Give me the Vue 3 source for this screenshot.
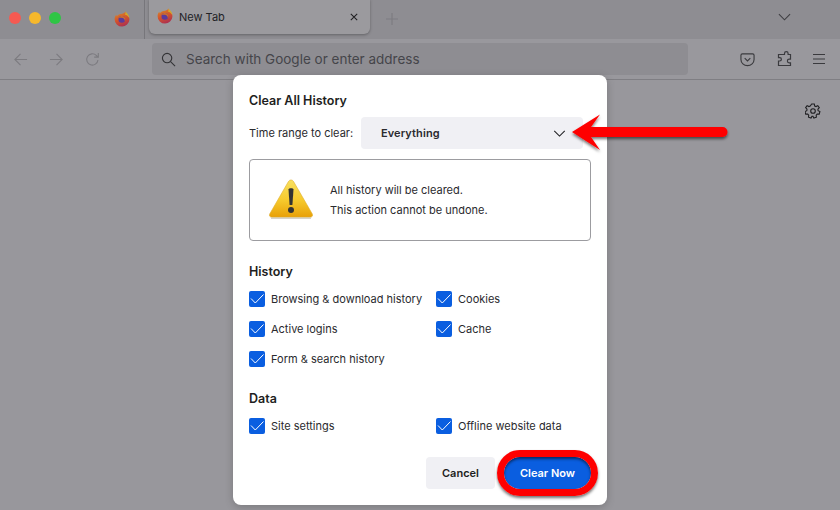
<script setup>
const historyItems = [
  { label: 'Browsing & download history' },
  { label: 'Cookies' },
  { label: 'Active logins' },
  { label: 'Cache' },
  { label: 'Form & search history' },
]
const dataItems = [{ label: 'Site settings' }, { label: 'Offline website data' }]
</script>

<template>
  <div class="window">
    <div class="tabstrip">
      <div class="lights">
        <span class="light red"></span>
        <span class="light yellow"></span>
        <span class="light green"></span>
      </div>
      <div class="pinned">
        <svg class="fx" viewBox="0 0 16 16"><use href="#fxlogo" /></svg>
      </div>
      <div class="tab">
        <svg class="fx" viewBox="0 0 16 16">
          <defs>
            <linearGradient id="fxg" x1="0.2" y1="0" x2="0.6" y2="1">
              <stop offset="0" stop-color="#d88a2a" />
              <stop offset="0.5" stop-color="#d4552b" />
              <stop offset="1" stop-color="#ab2f52" />
            </linearGradient>
            <g id="fxlogo">
              <path d="M11.2 0.6c.5 1.4 1.6 2 2.600 3.300 1.200 1.500 1.700 3.100 1.600 4.800A7.400 7.400 0 0 1 8 15.600 7.400 7.400 0 0 1 .6 8.200c0-1.700.6-3.300 1.600-4.500l.6 1.500c.9-1.200 2.400-2 4-2.200 1.800-.2 3.600-.5 4.400-2.400z" fill="url(#fxg)" />
              <path d="M11.4.6c1.600 1.300 3.700 3.600 4 6.700-1-1.800-2.800-3.300-4.600-3.700.8-.8 1-1.900.6-3z" fill="#d2a92c" />
              <circle cx="7.800" cy="8.400" r="3.300" fill="#5b3a9c" />
              <path d="M4.800 6.600c1.200-1.800 4.200-2 5.600-.5 1 1.100 1.200 2.700.4 3.800.1-1.700-1.300-3-3-3.100-1-.1-2.200.2-3-.2z" fill="#cf6f2b" />
            </g>
          </defs>
          <use href="#fxlogo" />
        </svg>
        <span class="tab-title">New Tab</span>
        <svg class="tab-close" viewBox="0 0 10 10"><path d="M1 1l8 8M9 1l-8 8" /></svg>
      </div>
      <svg class="newtab" viewBox="0 0 12 12"><path d="M6 0v12M0 6h12" /></svg>
      <svg class="alltabs" viewBox="0 0 14 8"><path d="M1 1l6 6 6-6" /></svg>
    </div>

    <div class="toolbar">
      <svg class="nav" viewBox="0 0 16 16"><path d="M15 8H2M8 2L2 8l6 6" /></svg>
      <svg class="nav" viewBox="0 0 16 16"><path d="M1 8h13M8 2l6 6-6 6" /></svg>
      <svg class="nav" viewBox="0 0 16 16"><path d="M13.800 8.500A6 6 0 1 1 12 3.600L14 5.500M14.200 1v4.500H9.800" /></svg>
      <div class="urlbar">
        <svg class="search" viewBox="0 0 16 16"><circle cx="6.500" cy="6.500" r="5" /><path d="M10.200 10.200L15 15" /></svg>
        <span>Search with Google or enter address</span>
      </div>
      <svg class="tool pocket" viewBox="0 0 16 16"><path d="M2.500 2h11A1.500 1.500 0 0 1 15 3.500V8A7 6.500 0 0 1 1 8V3.500A1.500 1.500 0 0 1 2.500 2zM5 6.500l3 3 3-3" /></svg>
      <svg class="tool puzzle" viewBox="0 0 16 16"><path d="M6.500 3.500h2V2.500a1.800 1.800 0 0 1 3.600 0v1h2.400v4.700h-1.300a1.800 1.800 0 0 0 0 3.600h1.300v2.700H2.500v-4.500h1.200a1.700 1.700 0 0 0 0-3.400H2.500V3.500z" /></svg>
      <svg class="tool menu" viewBox="0 0 14 12"><path d="M1 1.500h12M1 6h12M1 10.500h12" /></svg>
    </div>

    <div class="content">
      <svg class="gear" viewBox="0 0 16 16">
        <circle cx="8" cy="8" r="2.300" />
        <path d="M6.700 1h2.600l.4 2 1.300.6 1.800-1 1.500 2.100-1.400 1.500.2 1.500 1.800.9-.7 2.500-2 0-1 1.100.2 2-2.500.8-1-1.800H7l-1 1.800-2.500-.8.200-2-1-1.100-2 0-.7-2.500 1.800-.9.200-1.500L.6 4.700l1.500-2.100 1.800 1 1.300-.6z" />
      </svg>
    </div>

    <div class="dialog">
      <h2 class="title">Clear All History</h2>
      <div class="range">
        <span>Time range to clear:</span>
        <div class="select">
          <b>Everything</b>
          <svg viewBox="0 0 14 8"><path d="M1 1l6 6 6-6" /></svg>
        </div>
      </div>
      <div class="warning">
        <svg class="warn-icon" viewBox="0 0 46 42">
          <defs>
            <linearGradient id="wg" x1="0" y1="0" x2="0" y2="1">
              <stop offset="0" stop-color="#f8e060" />
              <stop offset="0.55" stop-color="#f6c92c" />
              <stop offset="1" stop-color="#e8a008" />
            </linearGradient>
          </defs>
          <path d="M23 2c1.200 0 2 .6 2.700 1.800l18.500 32c.9 1.700.2 3.400-2 3.400H3.800c-2.200 0-2.900-1.700-2-3.400l18.500-32C21 2.600 21.800 2 23 2z" fill="url(#wg)" stroke="#e0b030" stroke-width=".6" />
          <path d="M3 40.200h40" stroke="#c9c5b8" stroke-width="1.200" />
          <path d="M20.500 11.500c0-1.600 5-1.600 5 0l-1.100 15.500h-2.800z" fill="#333" />
          <circle cx="23" cy="32" r="3" fill="#333" />
        </svg>
        <div class="warn-text">
          <p>All history will be cleared.</p>
          <p>This action cannot be undone.</p>
        </div>
      </div>

      <h3 class="section history-head">History</h3>
      <div class="checks">
        <label v-for="item in historyItems" :key="item.label" class="check">
          <svg class="box" viewBox="0 0 16 16"><rect width="16" height="16" rx="2" /><path d="M2 7.500L6.300 12 14.500 3.500" /></svg>
          <span>{{ item.label }}</span>
        </label>
      </div>

      <h3 class="section data-head">Data</h3>
      <div class="checks">
        <label v-for="item in dataItems" :key="item.label" class="check">
          <svg class="box" viewBox="0 0 16 16"><rect width="16" height="16" rx="2" /><path d="M2 7.500L6.300 12 14.500 3.500" /></svg>
          <span>{{ item.label }}</span>
        </label>
      </div>

      <div class="actions">
        <button class="btn cancel">Cancel</button>
        <button class="btn primary">Clear Now</button>
      </div>
    </div>

    <svg class="arrow" viewBox="0 0 160 50" width="160" height="50">
      <defs>
        <filter id="ds" x="-10%" y="-20%" width="120%" height="150%">
          <feDropShadow dx="0" dy="2" stdDeviation="1.500" flood-color="#000" flood-opacity=".55" />
        </filter>
      </defs>
      <path d="M2 24L30 6.500 21 19H152.500a4.800 4.800 0 0 1 0 10H21l9 13z" fill="#fe0000" filter="url(#ds)" />
    </svg>
    <div class="ring"></div>
  </div>
</template>

<style>
html, body { margin: 0; overflow: hidden; }
</style>

<style scoped>
.window {
  position: relative;
  width: 840px;
  height: 510px;
  overflow: hidden;
  display: flex;
  flex-direction: column;
  background: #98979c;
  font-family: Inter, "Liberation Sans", sans-serif;
  color: #1e1e21;
}
.tabstrip {
  height: 39px;
  flex: none;
  display: flex;
  align-items: center;
  background: #8e8d92;
  position: relative;
}
.lights { display: flex; gap: 8px; padding-left: 9px; align-items: center; margin-top: -4px; }
.light { width: 12px; height: 12px; border-radius: 50%; }
.red { background: #f55a52; }
.yellow { background: #f6b82c; }
.green { background: #2fc545; }
.pinned {
  width: 30px;
  height: 39px;
  margin-left: 39px;
  padding-right: 14px;
  display: flex;
  align-items: center;
  justify-content: flex-end;
  border-right: 1px solid #77767b;
  box-sizing: content-box;
}
.fx { width: 16px; height: 16px; flex: none; margin-top: -2px; }
.tab {
  width: 221px;
  height: 35px;
  margin: -1px 0 0 4px;
  align-self: flex-start;
  box-sizing: border-box;
  display: flex;
  align-items: center;
  padding: 0 12px 0 8px;
  background: #9b9a9e;
  border-radius: 0 0 6px 6px;
  box-shadow: 0 1px 3px rgba(0, 0, 0, .3);
}
.tab-title { font-size: 11px; margin-left: 6px; margin-top: 1px; flex: 1; color: #222226; }
.tab-close { width: 8px; height: 8px; fill: none; stroke: #1f1f22; stroke-width: 1.300; }
.newtab { width: 12px; height: 12px; margin-left: 16px; margin-top: -2px; fill: none; stroke: #7d7c81; stroke-width: 1.200; }
.alltabs { width: 13px; height: 8px; margin-left: auto; margin-right: 49px; margin-top: -6px; fill: none; stroke: #3f3f43; stroke-width: 1.200; }

.toolbar {
  height: 41px;
  flex: none;
  box-sizing: border-box;
  display: flex;
  align-items: center;
  padding: 0 13px;
  background: #99989d;
  border-bottom: 1px solid #7f7e83;
}
.nav { width: 15px; height: 15px; margin-right: 21px; fill: none; stroke: #7c7b80; stroke-width: 1.200; flex: none; }
.urlbar {
  width: 536px;
  height: 32px;
  margin-left: 31px;
  flex: none;
  display: flex;
  align-items: center;
  box-sizing: border-box;
  padding-left: 9px;
  border-radius: 4px;
  background: #8e8d92;
  font-size: 13.500px;
  color: #45454a;
}
.search { width: 15px; height: 15px; margin-right: 10px; fill: none; stroke: #333336; stroke-width: 1.200; }
.tool { fill: none; stroke: #3a3a3e; stroke-width: 1.200; flex: none; }
.pocket { width: 15px; height: 15px; margin-left: 52px; }
.puzzle { width: 16px; height: 16px; margin-left: 21px; }
.menu { width: 14px; height: 12px; margin-left: 20px; }

.content { flex: 1; position: relative; }
.gear {
  position: absolute;
  top: 23px;
  left: 805px;
  width: 16px;
  height: 16px;
  fill: none;
  stroke: #1f1f22;
  stroke-width: 1.100;
}

.dialog {
  position: absolute;
  left: 233px;
  top: 75px;
  width: 374px;
  height: 430px;
  box-sizing: border-box;
  padding: 17px 16px 0;
  background: #fff;
  border-radius: 8px;
  box-shadow: 0 2px 8px rgba(0, 0, 0, .2);
  display: flex;
  flex-direction: column;
}
.title { margin: 0; font-size: 12.500px; line-height: 18px; font-weight: 600; }
.range {
  display: flex;
  align-items: center;
  justify-content: space-between;
  margin-top: 7px;
  padding-right: 8px;
  font-size: 11px;
  color: #2a2a2e;
}
.select {
  width: 222px;
  height: 32px;
  box-sizing: border-box;
  padding: 0 17px 0 20px;
  display: flex;
  align-items: center;
  justify-content: space-between;
  background: #f0f0f4;
  border-radius: 4px;
  font-size: 11px;
  letter-spacing: .1px;
}
.select b { font-weight: 600; }
.select svg { width: 13px; height: 7px; fill: none; stroke: #1f1f22; stroke-width: 1.200; }
.warning {
  margin-top: 10px;
  height: 82px;
  box-sizing: border-box;
  border: 1px solid #9c9ca0;
  border-radius: 4px;
  display: flex;
  align-items: center;
  padding-left: 18px;
}
.warn-icon { width: 46px; height: 42px; flex: none; margin-top: -2px; }
.warn-text { margin-left: 16px; font-size: 11px; color: #2a2a2e; }
.warn-text p { margin: 0; line-height: 20px; }
.section { margin: 0; font-size: 12.500px; line-height: 18px; font-weight: 600; }
.history-head { margin-top: 22px; }
.data-head { margin-top: 16px; }
.checks {
  display: grid;
  grid-template-columns: 187px 1fr;
  grid-auto-rows: 30px;
  margin-top: 3px;
}
.check {
  display: flex;
  align-items: center;
  font-size: 11px;
  color: #2a2a2e;
}
.box { width: 16px; height: 16px; margin-right: 6px; flex: none; }
.box rect { fill: #0a5ee0; }
.box path { fill: none; stroke: #fff; stroke-width: 1; }
.actions {
  display: flex;
  justify-content: flex-end;
  gap: 9px;
  margin-top: 16px;
}
.btn {
  height: 32px;
  border: 0;
  border-radius: 4px;
  font: 600 11px Inter, "Liberation Sans", sans-serif;
  padding: 0;
}
.cancel { width: 69px; background: #f0f0f4; color: #1e1e21; }
.primary { width: 87px; background: #0a5ee0; color: #fff; margin-right: 0; border-radius: 16px; }

.arrow { position: absolute; left: 570px; top: 108px; }
.ring {
  position: absolute;
  left: 497px;
  top: 450px;
  width: 101px;
  height: 46px;
  box-sizing: border-box;
  border: 7px solid #fe0000;
  border-radius: 24px;
  box-shadow: 0 2px 3px rgba(0, 0, 0, .55), inset 0 2px 3px rgba(0, 0, 0, .55);
}
</style>
